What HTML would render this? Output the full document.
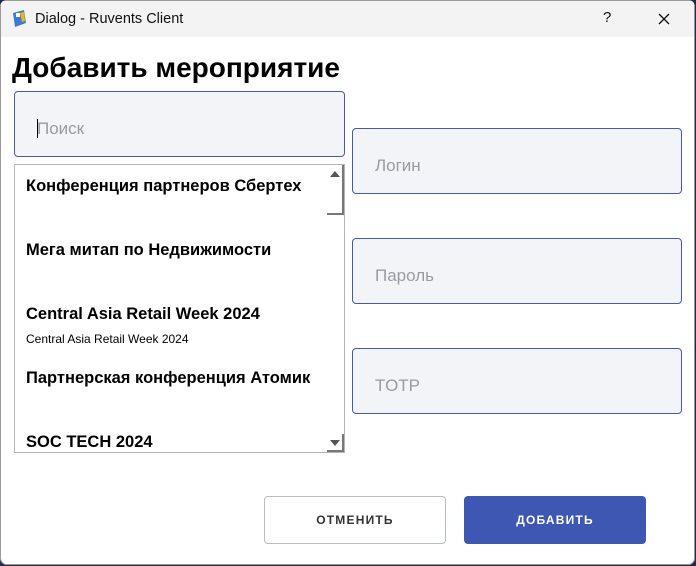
<!DOCTYPE html>
<html><head><meta charset="utf-8"><style>
*{margin:0;padding:0;box-sizing:border-box}
body{width:696px;height:566px;background:#1f2a44;font-family:"Liberation Sans",sans-serif;position:relative;overflow:hidden}
.win{position:absolute;left:0;top:0;width:695px;height:565px;background:#fff;border-radius:7px;overflow:hidden;box-shadow:inset 0 0 0 1px #9a9a9a}
.tb{position:absolute;left:1px;top:1px;width:693px;height:36px;background:#f3f3f3}
.abs{position:absolute}
.inp{position:absolute;background:#f3f4f8;border:1px solid #4558b5;border-radius:4px;color:#9a9aa2;font-size:17px;padding-left:22px}
.it{position:absolute;left:11px;font-weight:bold;font-size:16.5px;color:#000}
</style></head><body>
<div class="win">
<div class="tb">
 <svg class="abs" style="left:9px;top:8px" width="18" height="20" viewBox="0 0 18 20"><path d="M3 4 L14 1 L16 14 L5 18 Z" fill="#3a7bd5"/><path d="M10 4 L14 3 L15 12 L12 13 Z" fill="#f5b400"/><rect x="6" y="4" width="4" height="4" fill="#fff"/></svg>
 <div class="abs" style="left:34px;top:10px;color:#111;font-size:14.5px">Dialog - Ruvents Client</div>
 <div class="abs" style="left:602px;top:8px;font-size:15px;color:#111">?</div>
 <svg class="abs" style="left:657px;top:12px" width="12" height="12"><path d="M1 1L11 11M11 1L1 11" stroke="#111" stroke-width="1.3"/></svg>
</div>
<div class="abs" style="left:12px;top:52px;font-size:28px;font-weight:bold;color:#000">Добавить мероприятие</div>
<div class="inp" style="left:14px;top:91px;width:331px;height:66px;line-height:74px">Поиск</div>
<div class="abs" style="left:37px;top:119px;width:1px;height:19px;background:#000"></div>
<div class="abs" style="left:14px;top:164px;width:331px;height:289px;border:1px solid #b5b5b5;background:#fff">
 <div class="it" style="top:12px">Конференция партнеров Сбертех</div>
 <div class="it" style="top:76px">Мега митап по Недвижимости</div>
 <div class="it" style="top:140px">Central Asia Retail Week 2024</div>
 <div class="abs" style="left:11px;top:167px;font-size:12px;color:#000">Central Asia Retail Week 2024</div>
 <div class="it" style="top:204px">Партнерская конференция Атомик</div>
 <div class="it" style="top:268px">SOC TECH 2024</div>
 <div class="abs" style="left:312px;top:0;width:17px;height:287px;background:#fff"></div>
 <div class="abs" style="left:312px;top:0;width:17px;height:50px;border-right:2px solid #777;border-bottom:2px solid #777"></div>
 <svg class="abs" style="left:315px;top:6px" width="10" height="6"><path d="M0 6L5 0L10 6Z" fill="#555"/></svg>
 <div class="abs" style="left:312px;top:269px;width:17px;height:18px;border-right:2px solid #777;border-bottom:2px solid #777"></div>
 <svg class="abs" style="left:315px;top:275px" width="10" height="6"><path d="M0 0L5 6L10 0Z" fill="#555"/></svg>
</div>
<div class="inp" style="left:352px;top:128px;width:330px;height:66px;line-height:74px">Логин</div>
<div class="inp" style="left:352px;top:238px;width:330px;height:66px;line-height:74px">Пароль</div>
<div class="inp" style="left:352px;top:348px;width:330px;height:66px;line-height:74px">TOTP</div>
<div class="abs" style="left:264px;top:496px;width:182px;height:48px;border:1px solid #b8bcc6;border-radius:4px;text-align:center;line-height:47px;font-size:12px;font-weight:bold;letter-spacing:1.2px;color:#333">ОТМЕНИТЬ</div>
<div class="abs" style="left:464px;top:496px;width:182px;height:48px;background:#3d57b3;border-radius:4px;text-align:center;line-height:48px;font-size:12px;font-weight:bold;letter-spacing:1.2px;color:#fff">ДОБАВИТЬ</div>
</div>
</body></html>
